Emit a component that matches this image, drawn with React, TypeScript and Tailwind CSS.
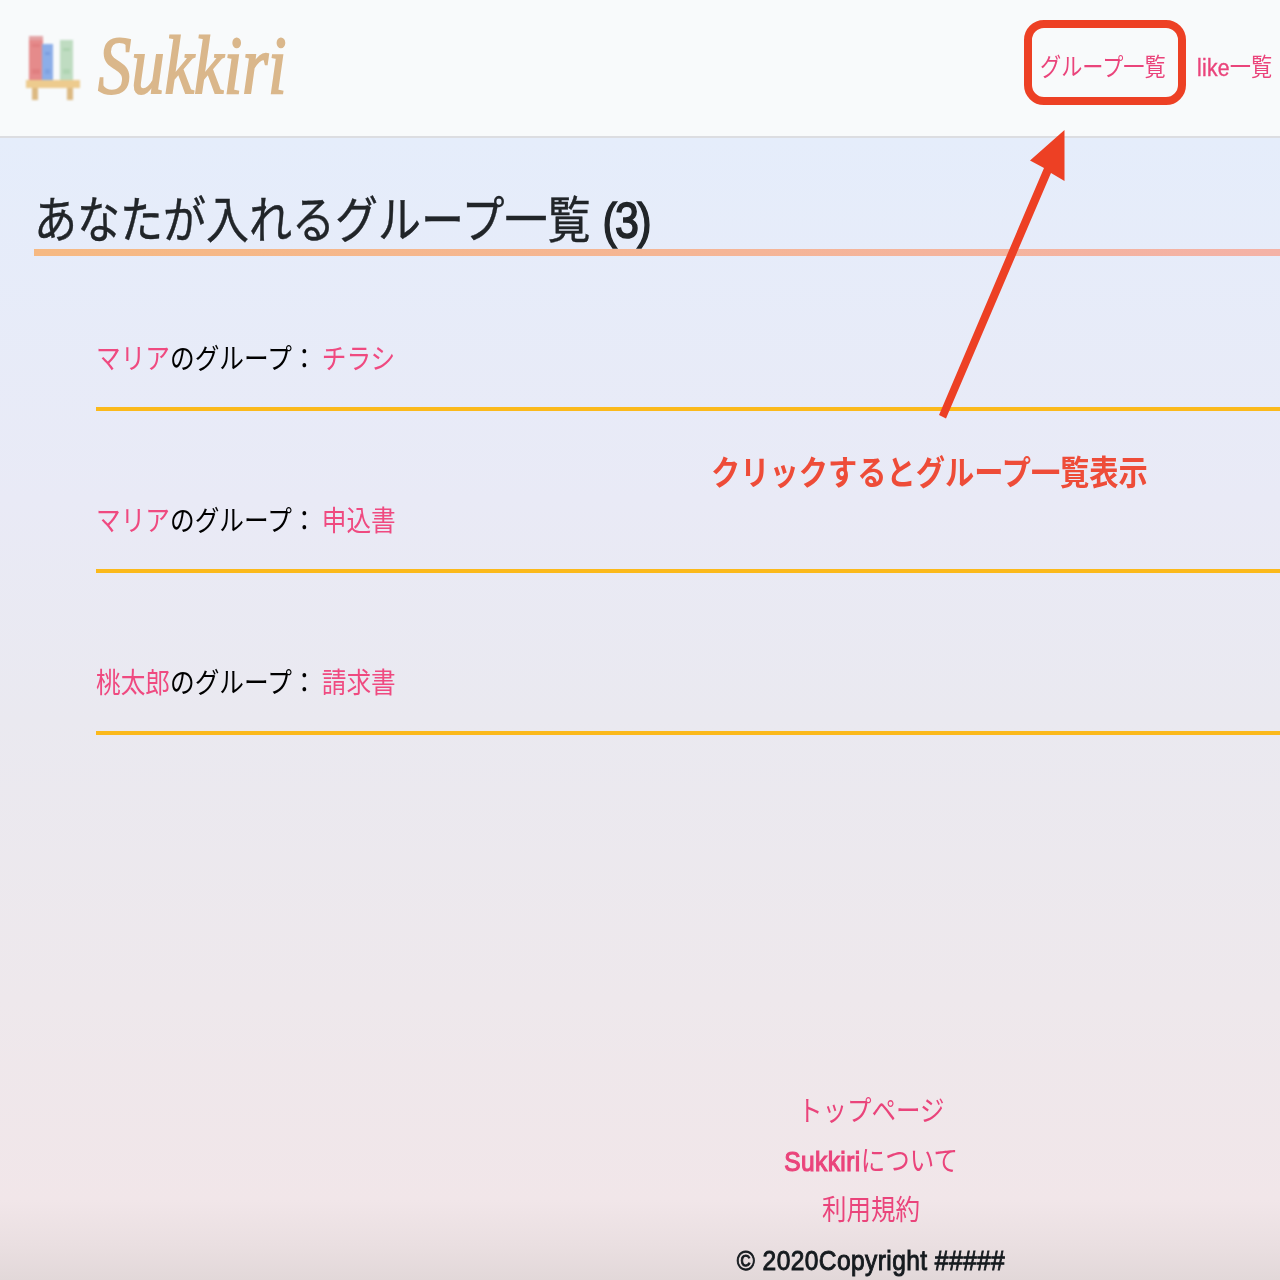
import type { ReactNode } from 'react';

type GroupRow = { owner: string; name: string };

const groups: GroupRow[] = [
  { owner: 'マリア', name: 'チラシ' },
  { owner: 'マリア', name: '申込書' },
  { owner: '桃太郎', name: '請求書' },
];

function Narrow({ children, className = '' }: { children: ReactNode; className?: string }) {
  return (
    <span className={`block whitespace-nowrap [transform:scaleX(0.86)] ${className}`}>{children}</span>
  );
}

function BookshelfLogo() {
  return (
    <svg className="h-[70px] w-[58px] shrink-0 blur-[1px]" viewBox="0 0 58 70">
      <rect x="5" y="4" width="14" height="45" fill="#e58b8b" />
      <rect x="5" y="4" width="14" height="4" fill="#e3a4a5" />
      <rect x="8" y="12" width="8" height="3" fill="#e07f80" />
      <rect x="8" y="37" width="8" height="5" fill="#e07f80" />
      <rect x="18" y="12" width="11" height="37" fill="#8caee8" />
      <rect x="21" y="20" width="5" height="3" fill="#7b9edf" />
      <rect x="21" y="37" width="5" height="5" fill="#7fa2e0" />
      <rect x="36" y="8" width="13" height="41" fill="#bfdcc1" />
      <rect x="39" y="16" width="7" height="3" fill="#aed3b1" />
      <rect x="39" y="37" width="7" height="5" fill="#b0d4b3" />
      <rect x="8" y="54" width="6" height="14" fill="#dcb982" />
      <rect x="43" y="54" width="6" height="14" fill="#dcb982" />
      <rect x="2" y="48" width="54" height="8" fill="#edcb8e" />
    </svg>
  );
}

function Header() {
  return (
    <header className="flex h-[138px] justify-between border-b-2 border-[#dcdde1] bg-[#f8fafb]">
      <a className="flex pl-[24px] pt-[32px]">
        <BookshelfLogo />
        <span className="ml-[16px] mt-[-17px] block h-[100px] w-[190px] origin-top-left whitespace-nowrap font-['Liberation_Serif'] text-[83px] leading-[100px] font-normal italic text-[#dab78b] [transform:scaleX(0.802)] [-webkit-text-stroke:2px_#dab78b]">
          Sukkiri
        </span>
      </a>
      <nav className="flex pt-[20px] text-[24.6px] leading-[36px] text-[#ea447b]">
        <a className="mr-[11px] h-[85px] w-[162px] rounded-[20px] border-[8px] border-[#ed4024] pl-[8px] pt-[22px]">
          <Narrow className="w-[150px] origin-left">グループ一覧</Narrow>
        </a>
        <a className="w-[83px] pt-[30px]">
          <Narrow className="w-[83px] origin-left">
            <span className="tracking-[0.3px] [-webkit-text-stroke:0.4px_#ea447b]">like</span>一覧
          </Narrow>
        </a>
      </nav>
    </header>
  );
}

function Annotation() {
  return (
    <div className="pointer-events-none absolute left-[711px] top-[130px] w-[440px] text-[#ee4c38]">
      <svg className="ml-[226px] block h-[290px] w-[130px]" viewBox="0 0 130 290">
        <path d="M127.500 0 L127.500 51 L114 43 L9 288.500 L2 285 L107 38 L93 30.500 Z" fill="#ed4024" />
      </svg>
      <Narrow className="mt-[28px] w-[520px] origin-left text-[34px] font-bold leading-[50px]">
        クリックするとグループ一覧表示
      </Narrow>
    </div>
  );
}

export default function App() {
  return (
    <div className="relative flex h-[1280px] w-[1280px] flex-col overflow-hidden bg-[linear-gradient(180deg,#e5edfb_138px,#e9eaf6_500px,#eae9f0_720px,#eee8ec_1000px,#f1e6e9_1200px,#eadfe1_1245px,#e2d8d9_1280px)] font-['Liberation_Sans','Noto_Sans_CJK_JP',sans-serif]">
      <Header />
      <main className="pl-[34px] pt-[46px]">
        <h1 className="h-[72px] border-b-[7px] [border-image:linear-gradient(90deg,#f6b982,#f4b2a6)_1] pt-[2px] text-[50px] font-normal leading-[70px] text-[#212529] [-webkit-text-stroke:0.4px_#212529]">
          <Narrow className="w-[800px] origin-left">
            あなたが入れるグループ一覧{' '}
            <span className="tracking-[-2px] [-webkit-text-stroke:1.6px_#212529]">(3)</span>
          </Narrow>
        </h1>
        <ul className="pl-[62px] pt-[74px] text-[28.7px] leading-[58px]">
          {groups.map((group) => (
            <li key={group.name} className="mb-[81px] h-[81px] border-b-4 border-[#fbb91b]">
              <Narrow className="w-[500px] origin-left">
                <a className="text-[#ef4a80]">{group.owner}</a>
                <span className="text-black">のグループ：</span>
                <a className="ml-[6px] text-[#ef4a80]">{group.name}</a>
              </Narrow>
            </li>
          ))}
        </ul>
      </main>
      <footer className="mt-auto ml-[571px] flex h-[193px] w-[600px] flex-col items-center text-[28.5px] leading-[49.5px] text-[#ea447b]">
        <Narrow>トップページ</Narrow>
        <Narrow>
          <span className="tracking-[0.5px] [-webkit-text-stroke:1.2px_#ea447b]">Sukkiri</span>について
        </Narrow>
        <Narrow>利用規約</Narrow>
        <Narrow className="tracking-[0.5px] text-[#151a1e] [-webkit-text-stroke:1px_#151a1e]">© 2020Copyright #####</Narrow>
      </footer>
      <Annotation />
    </div>
  );
}
